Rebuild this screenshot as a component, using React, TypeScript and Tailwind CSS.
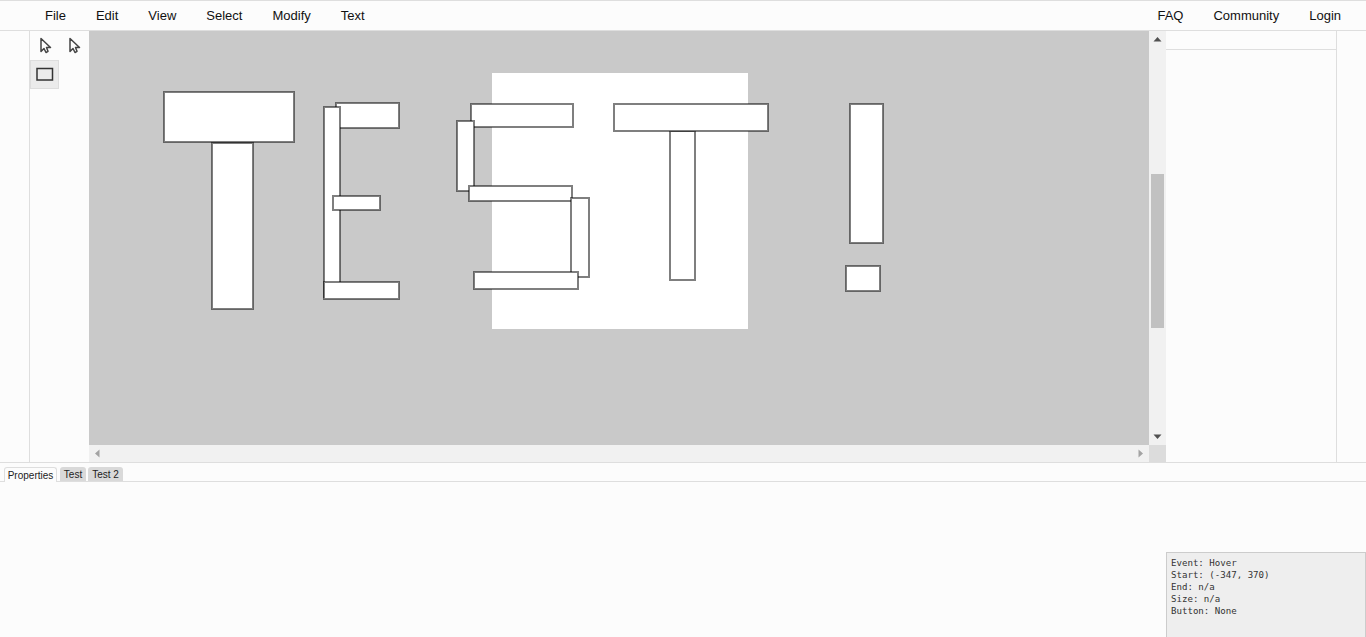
import React from 'react';

const leftMenu = ['File', 'Edit', 'View', 'Select', 'Modify', 'Text'];
const rightMenu = ['FAQ', 'Community', 'Login'];

// x, y, w, h in canvas coordinates (viewBox starts at the canvas corner)
const shapes = [
  [164, 92, 130, 50],
  [212, 143, 41, 166],
  [336, 103, 63, 25],
  [324, 107, 16, 190],
  [333, 196, 47, 14],
  [324, 282, 75, 17],
  [471, 104, 102, 23],
  [457, 121, 17, 70],
  [469, 186, 103, 15],
  [571, 198, 18, 79],
  [474, 272, 104, 17],
  [670, 131, 25, 149],
  [614, 104, 154, 27],
  [850, 104, 33, 139],
  [846, 266, 34, 25],
];

const PointerIcon: React.FC = () => (
  <svg width="14" height="18" viewBox="0 0 14 18">
    <path
      d="M3 1.5 L3 14.5 L6 11.5 L8 15.5 L10 14.3 L8.5 10.5 L12.5 10.5 Z"
      fill="#fcfcfc"
      stroke="#444"
      strokeWidth="1.5"
      strokeLinejoin="round"
    />
  </svg>
);

const RectIcon: React.FC = () => (
  <svg width="18" height="15" viewBox="0 0 18 15">
    <rect x="1" y="1.5" width="15.5" height="11.5" fill="none" stroke="#333" strokeWidth="1.5" />
  </svg>
);

const Arrow: React.FC<{ points: string; fill: string }> = ({ points, fill }) => (
  <svg width="9" height="9" viewBox="0 0 9 9">
    <polygon points={points} fill={fill} />
  </svg>
);

const MenuItem: React.FC<{ label: string }> = ({ label }) => (
  <span className="px-[15px] text-[13px] leading-[30px] text-[#111]">{label}</span>
);

const Canvas: React.FC = () => (
  <div className="min-w-0 flex-1 bg-[#c9c9c9]">
    <svg width="1060" height="414" viewBox="89 31 1060 414" className="block">
      <rect x="492" y="73" width="256" height="256" fill="#fff" />
      {shapes.map(([x, y, w, h]) => (
        <rect
          key={`${x}-${y}`}
          x={x}
          y={y}
          width={w}
          height={h}
          fill="#fff"
          stroke="#000"
          strokeOpacity="0.5"
          strokeWidth="2"
        />
      ))}
    </svg>
  </div>
);

export default function App() {
  return (
    <div className="flex h-[637px] w-[1366px] flex-col overflow-hidden bg-[#fcfcfc] font-['Liberation_Sans',Arial,sans-serif]">
      <div className="flex h-[31px] shrink-0 justify-between border-y border-[#dedede] pl-[30px] pr-[10px]">
        <div className="flex">
          {leftMenu.map(label => (
            <MenuItem key={label} label={label} />
          ))}
        </div>
        <div className="flex">
          {rightMenu.map(label => (
            <MenuItem key={label} label={label} />
          ))}
        </div>
      </div>

      <div className="flex h-[432px] shrink-0 border-b border-[#dedede]">
        <div className="w-[30px] shrink-0 border-r border-[#dedede]" />

        <div className="grid w-[59px] shrink-0 grid-cols-[30px_29px] content-start">
          <div className="flex h-[29px] items-center justify-center pt-[1px]">
            <PointerIcon />
          </div>
          <div className="flex h-[29px] items-center pl-[7px] pt-[1px]">
            <PointerIcon />
          </div>
          <div className="flex h-[29px] w-[29px] items-center justify-center border border-[#dddddd] bg-[#ebebeb]">
            <RectIcon />
          </div>
        </div>

        <div className="flex w-[1077px] shrink-0 flex-col">
          <div className="flex h-[414px]">
            <Canvas />
            <div className="flex w-[17px] shrink-0 flex-col items-center bg-[#f1f1f1]">
              <div className="flex h-[17px] items-center justify-center">
                <Arrow points="4.5,2 8.5,6.5 0.5,6.5" fill="#505050" />
              </div>
              <div className="flex-1 pt-[126px]">
                <div className="h-[154px] w-[13px] bg-[#c1c1c1]" />
              </div>
              <div className="flex h-[17px] items-center justify-center">
                <Arrow points="0.5,2.5 8.5,2.5 4.5,7" fill="#505050" />
              </div>
            </div>
          </div>
          <div className="flex h-[17px]">
            <div className="flex flex-1 items-center justify-between bg-[#f1f1f1] px-[4px]">
              <Arrow points="6.5,0.5 6.5,8.5 2,4.5" fill="#a3a3a3" />
              <Arrow points="2.5,0.5 2.5,8.5 7,4.5" fill="#a3a3a3" />
            </div>
            <div className="w-[17px] bg-[#dcdcdc]" />
          </div>
        </div>

        <div className="w-[171px] shrink-0 border-r border-[#dedede]">
          <div className="h-[19px] border-b border-[#dedede]" />
        </div>
        <div className="flex-1" />
      </div>

      <div className="flex h-[19px] shrink-0 items-end gap-[2px] border-b border-[#dedede] pl-[4px] text-center text-[10px] leading-[15px] text-[#222]">
        <span className="mb-[-1px] mr-[1px] h-[15px] w-[53px] rounded-t-[3px] border border-b-0 border-[#dedede] bg-[#fcfcfc]">
          Properties
        </span>
        <span className="h-[14px] w-[26px] rounded-t-[3px] bg-[#d9d9d9]">Test</span>
        <span className="h-[14px] w-[35px] rounded-t-[3px] bg-[#d9d9d9]">Test 2</span>
      </div>

      <div className="flex flex-1 items-end justify-end">
        <div className="h-[85px] w-[200px] border border-b-0 border-[#cccccc] bg-[#eeeeee] px-[4px] pt-[4px] font-['DejaVu_Sans_Mono',monospace] text-[9.1px] leading-[12px] text-[#333]">
          <div>Event: Hover</div>
          <div>Start: (-347, 370)</div>
          <div>End: n/a</div>
          <div>Size: n/a</div>
          <div>Button: None</div>
        </div>
      </div>
    </div>
  );
}
